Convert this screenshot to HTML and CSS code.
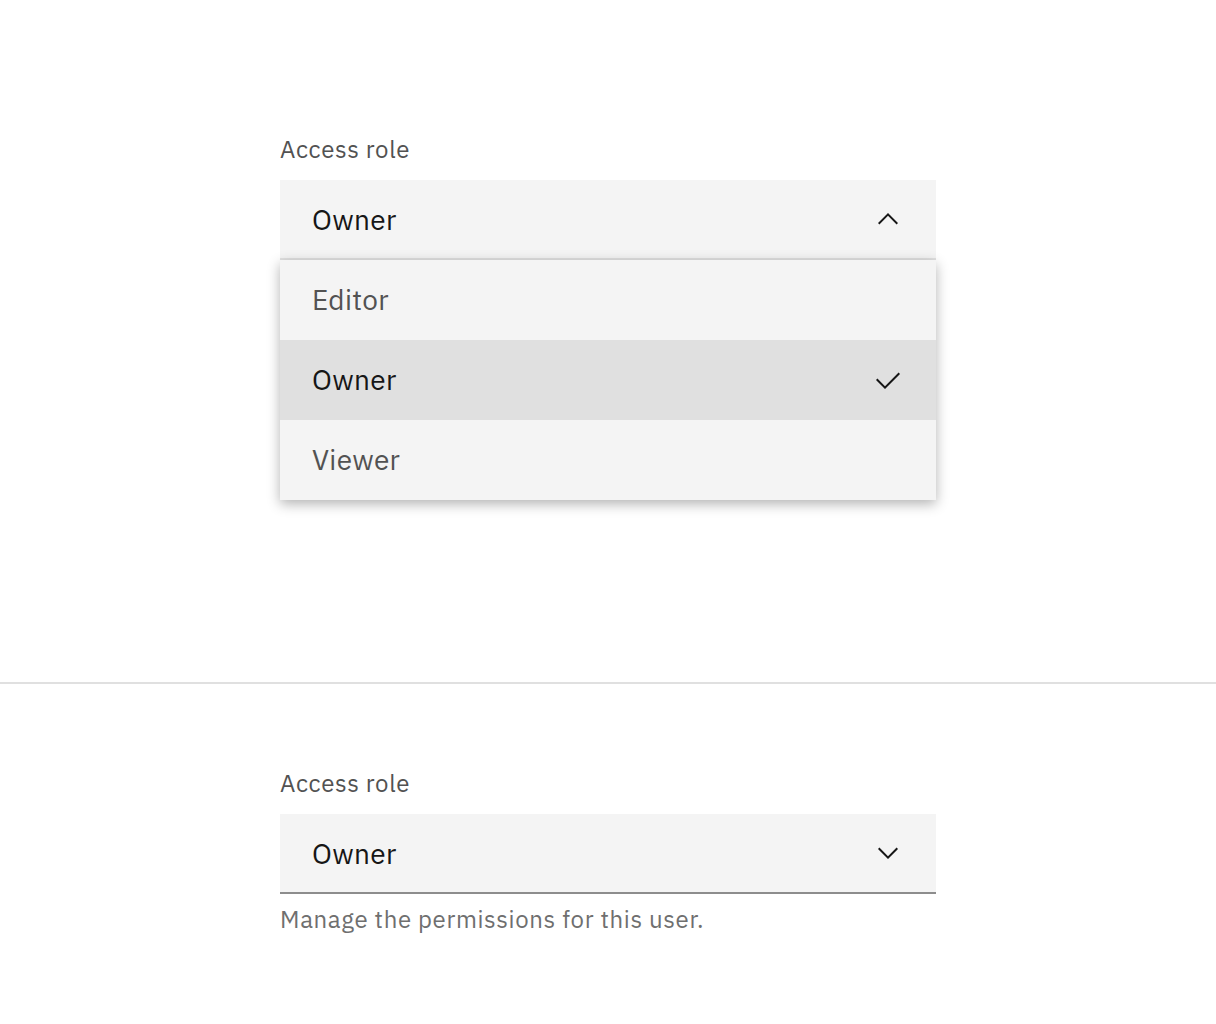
FILE: index.html
```html
<!DOCTYPE html>
<html lang="en">
<head>
<meta charset="utf-8">
<title>Dropdown</title>
<link rel="stylesheet" href="styles.css">
</head>
<body>
<section class="story story-open">
  <div class="dropdown">
    <div class="label">Access role</div>
    <div class="field-wrap">
      <div class="field field-open">
        <span class="value">Owner</span>
        <svg class="icon" width="32" height="32" viewBox="0 0 16 16"><path d="M8 5L13 10 12.3 10.7 8 6.4 3.7 10.7 3 10z" fill="#161616"/></svg>
      </div>
      <ul class="menu">
        <li class="item">Editor</li>
        <li class="item item-selected">Owner
          <svg class="icon icon-check" width="32" height="32" viewBox="0 0 32 32"><path d="M13 24L4 15 5.414 13.586 13 21.171 26.586 7.586 28 9 13 24z" fill="#161616"/></svg>
        </li>
        <li class="item">Viewer</li>
      </ul>
    </div>
  </div>
</section>
<hr class="divider">
<section class="story story-closed">
  <div class="dropdown">
    <div class="label">Access role</div>
    <div class="field field-closed">
      <span class="value">Owner</span>
      <svg class="icon" width="32" height="32" viewBox="0 0 16 16"><path d="M8 11L3 6 3.7 5.3 8 9.6 12.3 5.3 13 6z" fill="#161616"/></svg>
    </div>
    <div class="helper">Manage the permissions for this user.</div>
  </div>
</section>
</body>
</html>
```

FILE: styles.css
```css
* { box-sizing: border-box; }
html, body { margin: 0; padding: 0; background: #ffffff; }
body { font-family: "IBM Plex Sans", Roboto, "Liberation Sans", sans-serif; color: #161616; }

.story { display: flex; justify-content: center; }
.story-open { height: 682px; padding-top: 133px; }
.story-closed { padding-top: 83px; }

.divider { margin: 0; border: 0; height: 2px; background: #e0e0e0; }

.dropdown { width: 656px; }

.label {
  font-size: 24px;
  line-height: 32px;
  letter-spacing: 0.64px;
  color: #525252;
  margin-bottom: 15px;
}

.field-wrap { position: relative; }

.field {
  height: 80px;
  background: #f4f4f4;
  display: flex;
  align-items: center;
  justify-content: space-between;
  padding: 0 32px;
}
.field-open { border-bottom: 2px solid #e0e0e0; }
.field-closed { border-bottom: 2px solid #8d8d8d; }

.value {
  font-size: 28px;
  letter-spacing: 0.32px;
  color: #161616;
}

.icon { display: block; flex: none; }
.icon-check { margin-top: 3px; }

.menu {
  position: absolute;
  left: 0;
  right: 0;
  top: 80px;
  margin: 0;
  padding: 0;
  list-style: none;
  background: #f4f4f4;
  box-shadow: 0 4px 12px rgba(0, 0, 0, 0.3);
}

.item {
  height: 80px;
  display: flex;
  align-items: center;
  justify-content: space-between;
  padding: 0 32px 2px;
  font-size: 28px;
  letter-spacing: 0.32px;
  color: #525252;
}
.item-selected { background: #e0e0e0; color: #161616; }

.helper {
  margin-top: 9px;
  font-size: 24px;
  line-height: 32px;
  letter-spacing: 0.64px;
  color: #6f6f6f;
}
```
